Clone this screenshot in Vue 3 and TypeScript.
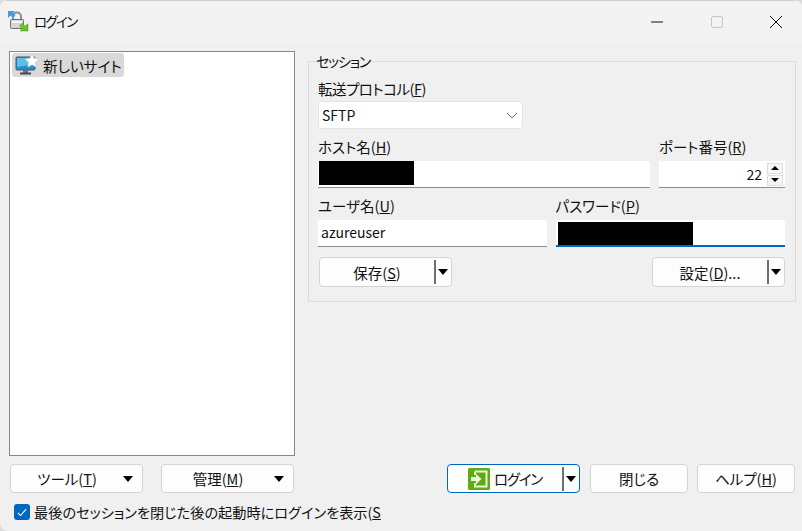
<script setup lang="ts">
const title = 'ログイン'
</script>

<template>
  <div class="win">
    <header class="titlebar">
      <svg class="appicon" width="22" height="22" viewBox="0 0 22 22">
        <path d="M6 10V6.500a4 4 0 0 1 8 0V10" fill="none" stroke="#8a8f94" stroke-width="2" />
        <rect x="3.500" y="9.500" width="13" height="9" rx="1" fill="#d4d5d6" stroke="#6d7074" />
        <rect x="5" y="11" width="10" height="2" fill="#f4f4f4" />
        <path d="M1 1h7L6 3l2.500 2.500L6 8 3.500 5.500 1 8z" fill="#3f9be6" />
        <path d="M21 21h-8l2.300-2.300-2.800-2.800 2.600-2.600 2.800 2.800L21 13.800z" fill="#6fc02b" stroke="#4f9a18" stroke-width=".5" />
      </svg>
      <span class="title">{{ title }}</span>
      <div class="caption">
        <svg width="14" height="14" viewBox="0 0 14 14" class="cap min"><path d="M1 7h12" stroke="#111" stroke-width="1" /></svg>
        <svg width="14" height="14" viewBox="0 0 14 14" class="cap max"><rect x="1.500" y="1.500" width="11" height="11" rx="1.500" fill="none" stroke="#c6c6c6" /></svg>
        <svg width="14" height="14" viewBox="0 0 14 14" class="cap close"><path d="M1 1l12 12M13 1L1 13" stroke="#111" stroke-width="1" /></svg>
      </div>
    </header>

    <main class="content">
      <div class="columns">
        <section class="tree">
          <div class="tree-item">
            <svg width="24" height="22" viewBox="0 0 24 22">
              <rect x="1" y="3" width="19" height="13" rx="1" fill="#2a8fc9" stroke="#3c5a6e" />
              <path d="M2 4h17v6L2 13z" fill="#5cc0ea" />
              <rect x="8" y="16" width="5" height="3" fill="#6d7278" />
              <rect x="5" y="18.500" width="11" height="2" fill="#454a50" />
              <path d="M17 0l2.100 4.300 4.700.7-3.400 3.300.8 4.700-4.200-2.200-4.200 2.200.8-4.700L10.200 5l4.700-.7z" fill="#fff" stroke="#c9d3da" stroke-width=".6" />
            </svg>
            <span class="tree-label">新しいサイト</span>
          </div>
        </section>

        <fieldset class="session">
          <legend>セッション</legend>
          <label class="lbl first">転送プロトコル(<u>F</u>)</label>
          <div class="select">
            <span>SFTP</span>
            <svg width="12" height="7" viewBox="0 0 12 7"><path d="M1 1l5 5 5-5" fill="none" stroke="#666" /></svg>
          </div>

          <div class="row host-row">
            <div class="col grow">
              <label class="lbl">ホスト名(<u>H</u>)</label>
              <div class="input"><span class="redact host-redact"></span></div>
            </div>
            <div class="col port">
              <label class="lbl">ポート番号(<u>R</u>)</label>
              <div class="input port-input">
                <span class="port-val">22</span>
                <div class="spin">
                  <span class="spin-btn"><i class="tri up"></i></span>
                  <span class="spin-btn"><i class="tri"></i></span>
                </div>
              </div>
            </div>
          </div>

          <div class="row user-row">
            <div class="col half">
              <label class="lbl">ユーザ名(<u>U</u>)</label>
              <div class="input"><span class="val">azureuser</span></div>
            </div>
            <div class="col half">
              <label class="lbl">パスワード(<u>P</u>)</label>
              <div class="input focus"><span class="redact pass-redact"></span></div>
            </div>
          </div>

          <div class="row actions">
            <button class="btn split">
              <span class="btn-text">保存(<u>S</u>)</span>
              <span class="sep"></span><i class="tri"></i>
            </button>
            <button class="btn split">
              <span class="btn-text">設定(<u>D</u>)...</span>
              <span class="sep"></span><i class="tri"></i>
            </button>
          </div>
        </fieldset>
      </div>

      <div class="bottom">
        <div class="bottom-left">
          <button class="btn drop"><span class="btn-text">ツール(<u>T</u>)</span><i class="tri"></i></button>
          <button class="btn drop"><span class="btn-text">管理(<u>M</u>)</span><i class="tri"></i></button>
        </div>
        <div class="bottom-right">
          <button class="btn split default">
            <span class="btn-text login">
              <svg width="22" height="22" viewBox="0 0 22 22">
                <rect width="22" height="22" rx="1.500" fill="#5eab13" />
                <path d="M7 3.500h11.500v15H7v-3.500M7 7V3.500" fill="none" stroke="#e9f5dc" stroke-width="2" />
                <path d="M3 9h5V5.800l5.500 5.200L8 16.200V13H3z" fill="#e9f5dc" />
              </svg>
              <span class="login-text">ログイン</span>
            </span>
            <span class="sep"></span><i class="tri"></i>
          </button>
          <button class="btn small">閉じる</button>
          <button class="btn small">ヘルプ(<u>H</u>)</button>
        </div>
      </div>

      <div class="check-row">
        <span class="check">
          <svg width="10" height="9" viewBox="0 0 10 9"><path d="M.8 4.800l2.700 2.700L9.200 1.200" fill="none" stroke="#fff" stroke-width="1.100" /></svg>
        </span>
        <span class="check-label">最後のセッションを閉じた後の起動時にログインを表示(<u>S</u></span>
      </div>
    </main>
  </div>
</template>

<style>
html, body { margin: 0; background: #dcdcdc; }
</style>

<style scoped>
.win {
  width: 802px;
  height: 531px;
  background: #f0f0f0;
  border-radius: 8px 8px 0 8px;
  display: flex;
  flex-direction: column;
  overflow: hidden;
  font-family: "Noto Sans CJK JP", "Noto Sans", sans-serif;
  font-feature-settings: "palt";
  font-size: 14.500px;
  color: #111;
}
.titlebar {
  height: 41px;
  flex: none;
  background: #f3f3f3;
  border-top: 1px solid #cfcfcf;
  display: flex;
  align-items: center;
  padding: 0 0 0 7px;
}
.appicon { margin-top: -1px; }
.title { margin-left: 5px; font-size: 13.500px; letter-spacing: -1.700px; margin-top: -1px; }
.caption { margin-left: auto; display: flex; align-items: center; margin-right: 19px; gap: 45px; }
.cap { display: block; }
.min { margin-right: 1px; }
.content { flex: 1; display: flex; flex-direction: column; padding: 9px 0 0 9px; min-height: 0; }
.columns { display: flex; height: 405px; flex: none; }
.tree {
  width: 286px;
  box-sizing: border-box;
  border: 1px solid #828790;
  background: #fff;
  padding: 1px 2px;
}
.tree-item {
  width: 112px;
  height: 24px;
  background: #d9d9d9;
  border-radius: 3px;
  display: flex;
  align-items: center;
  box-sizing: border-box;
  padding-left: 3px;
}
.tree-label { margin-left: 4px; white-space: nowrap; font-size: 14.600px; }
.session {
  margin: 0 0 0 13px;
  width: 488px;
  height: 251px;
  box-sizing: border-box;
  border: 1px solid #dcdcdc;
  padding: 0 10px 0 9px;
  min-width: 0;
}
legend { padding: 0; margin-left: -2px; line-height: 20px; height: 20px; font-size: 14px; letter-spacing: -1.200px; }
.lbl { display: block; line-height: 20px; height: 20px; white-space: nowrap; }
.first { margin-top: 8px; letter-spacing: -.5px; }
.select {
  width: 205px;
  height: 28px;
  box-sizing: border-box;
  margin-top: 2px;
  background: #fff;
  border: 1px solid #e3e3e3;
  border-radius: 3px;
  display: flex;
  align-items: center;
  justify-content: space-between;
  padding: 0 3px;
  font-size: 14px;
}
.select svg { margin-right: 1px; }
.row { display: flex; }
.col { display: flex; flex-direction: column; }
.grow { width: 332px; }
.port { width: 126px; margin-left: 9px; }
.host-row { margin-top: 8px; }
.user-row { margin-top: 8px; gap: 9px; }
.half { width: 229px; }
.half + .half { width: 230px; }
.input {
  height: 27px;
  box-sizing: border-box;
  margin-top: 4px;
  background: #fff;
  border-bottom: 1px solid #8b8b8b;
  border-radius: 2px 2px 0 0;
  display: flex;
  align-items: center;
  padding-left: 1px;
  font-size: 14px;
}
.focus { border-bottom: 2px solid #0067c0; }
.redact { display: block; background: #000; }
.host-redact { width: 95px; height: 24px; margin-top: -2px; }
.pass-redact { width: 135px; height: 23px; margin: 2px 0 0 1px; }
.val { margin: -2px 0 0 2px; }
.port-input { justify-content: flex-end; padding-right: 2px; }
.port-val { margin-right: 5px; }
.spin { display: flex; flex-direction: column; gap: 1px; }
.spin-btn {
  width: 14px;
  height: 9px;
  background: #f6f6f6;
  border: 1px solid #dedede;
  display: flex;
  align-items: center;
  justify-content: center;
}
.spin .tri { border-width: 4px 4px 0; }
.spin .tri.up { border-width: 0 4px 4px; border-color: transparent transparent #000; }
.tri {
  display: block;
  width: 0;
  height: 0;
  flex: none;
  border-style: solid;
  border-width: 6px 5.500px 0;
  border-color: #000 transparent transparent;
}
.actions { margin-top: 10px; justify-content: space-between; width: 466px; margin-left: 1px; }
.btn {
  width: 133px;
  height: 30px;
  box-sizing: border-box;
  padding: 0;
  background: #fdfdfd;
  border: 1px solid #d3d3d3;
  border-radius: 4px;
  font: inherit;
  font-feature-settings: "palt";
  color: inherit;
  display: flex;
  align-items: center;
  justify-content: center;
  white-space: nowrap;
}
.btn-text { flex: 1; text-align: center; }
.split .sep { width: 2px; height: 24px; background: #6f6f6f; flex: none; }
.split .tri { margin: 0 3px 0 2px; }
.drop .tri { margin-right: 9px; }
.bottom { display: flex; justify-content: space-between; margin-top: 8px; width: 785px; margin-left: 1px; flex: none; }
.bottom .btn { height: 29px; }
.bottom-left { display: flex; gap: 18px; }
.bottom-right { display: flex; gap: 10px; }
.bottom-right .small { width: 98px; }
.bottom-right .small + .small { margin-left: -1px; }
.default { border: 1px solid #0067c0; }
.login { display: flex; align-items: center; justify-content: center; gap: 4px; }
.login-text { letter-spacing: -1.200px; }
.check-row { display: flex; align-items: center; margin: 9px 0 0 5px; }
.check {
  width: 16px;
  height: 16px;
  background: #0067c0;
  border-radius: 3px;
  display: flex;
  align-items: center;
  justify-content: center;
}
.check-label { margin-left: 4px; white-space: nowrap; line-height: 20px; font-size: 14.200px; }
</style>
